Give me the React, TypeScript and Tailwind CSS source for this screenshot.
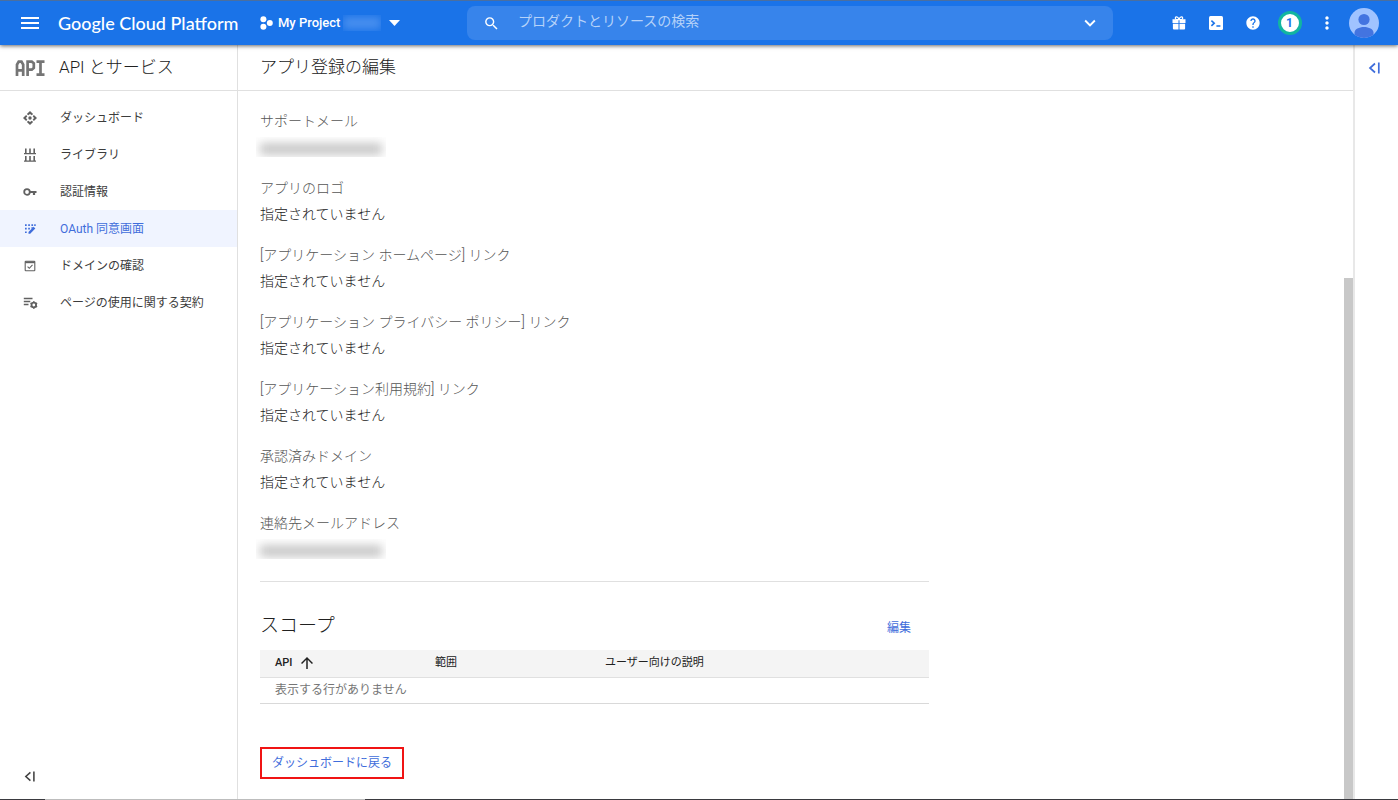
import React from 'react';
import { MdArrowUpward, MdExpandMore, MdHelp, MdMoreVert, MdSearch } from 'react-icons/md';

const MenuIcon = () => (
  <svg viewBox="0 0 18 12" className="w-[18px] h-3" fill="currentColor">
    <path d="M0 0h18v2H0zM0 5h18v2H0zM0 10h18v2H0z" />
  </svg>
);

const ProjectIcon = () => (
  <svg viewBox="0 0 13 14" className="w-[13px] h-3.5" fill="currentColor">
    <circle cx="3.4" cy="3.2" r="3" />
    <circle cx="9.8" cy="7" r="3" />
    <circle cx="3.4" cy="10.8" r="3" />
  </svg>
);

const GiftIcon = () => (
  <svg viewBox="0 0 14 14" className="w-3.5 h-3.5" fill="currentColor">
    <path d="M.5 3.3h6v3.7h-6zM7.500 3.300h6v3.700h-6zM.9 7.700h5.600v5.700H1.900a1 1 0 0 1-1-1zM7.500 7.700h5.600v4.700a1 1 0 0 1-1 1H7.500z" />
    <path d="M7 3.600C6.400 1.600 5.400.8 4.400.9 2.800 1.100 3 3.500 4.600 3.600zM7 3.600C7.600 1.600 8.600.8 9.600.9c1.600.2 1.400 2.600-.2 2.700z" fill="none" stroke="currentColor" strokeWidth="1.200" />
  </svg>
);

const ShellIcon = () => (
  <svg viewBox="0 0 14 14" className="w-3.5 h-3.5">
    <rect width="14" height="14" rx="1.5" fill="#fff" />
    <path d="M2.4 4.6 5.2 7.2 2.4 9.8M7.4 10h4" fill="none" stroke="#1a73e8" strokeWidth="1.6" />
  </svg>
);

const AvatarIcon = () => (
  <svg viewBox="0 0 30 30" className="w-[30px] h-[30px]">
    <clipPath id="avatar">
      <circle cx="15" cy="15" r="15" />
    </clipPath>
    <g clipPath="url(#avatar)">
      <rect width="30" height="30" fill="#a0c3ff" />
      <circle cx="15" cy="11.5" r="5.6" fill="#4374e0" />
      <path d="M5.5 30v-5.5c0-3.4 4.6-5.6 9.5-5.6s9.5 2.2 9.5 5.6V30z" fill="#4374e0" />
    </g>
  </svg>
);

const ApiLogo = () => (
  <svg viewBox="0 0 30 16" className="w-[30px] h-4" fill="none" stroke="#757575" strokeWidth="2.7">
    <path d="M2 16V4.600l1.700-2.900h2.800l1.700 2.900V16M2 10.300h6.200" />
    <path d="M12.600 16V1.700h4.200l2 1.600v4.700l-2 1.700h-4.200" />
    <path d="M21.500 1.700h8M25.500 1.700v13M21.500 14.600h8" />
  </svg>
);

const DashboardIcon = () => (
  <svg viewBox="0 0 14 14" className="w-3.5 h-3.5" fill="currentColor">
    <circle cx="7" cy="7" r="1.700" />
    <path d="M7 0 10.100 3.100 8.800 4.300 7 3 5.200 4.300 3.900 3.100zM7 14l3.100-3.100-1.300-1.200L7 11 5.200 9.700l-1.300 1.200zM0 7l3.100-3.100 1.200 1.300L3 7l1.300 1.800-1.200 1.300zM14 7l-3.100-3.100-1.200 1.300L11 7 9.700 8.800l1.200 1.300z" />
  </svg>
);

const LibraryIcon = () => (
  <svg viewBox="0 0 14 14" className="w-3.5 h-3.5" fill="currentColor">
    <path d="M2 .5h1.600v4.500H2zM6.200.5h1.600v4.500H6.200zM10.400.5H12v4.500h-1.600zM1 5h12v1.200H1zM2 8h1.600v4.500H2zM6.200 8h1.600v4.500H6.200zM10.400 8H12v4.500h-1.600zM1 12.500h12v1.200H1z" />
  </svg>
);

const KeyIcon = () => (
  <svg viewBox="0 0 14 14" className="w-3.5 h-3.5" fill="none" stroke="currentColor" strokeWidth="1.8">
    <circle cx="4" cy="7" r="2.800" />
    <path d="M6.800 7h6.700M11 7v3" strokeWidth="2.200" />
  </svg>
);

const ConsentIcon = () => (
  <svg viewBox="0 0 12 12" className="w-3 h-3" fill="currentColor">
    <path d="M1 1.200h1.700v1.700H1zM4.200 1.200h1.700v1.700H4.200zM7.400 1.200h1.700v1.700H7.400zM10.200 1.200h1.500v1.700h-1.500zM1 4.800h1.700v1.700H1zM4.200 4.800h1.700v1.700H4.200zM7.400 4.300h1.500v1.500H7.400zM1 8.400h1.700v1.700H1z" />
    <path d="M4.500 10.700V8.900l5.100-5.100 1.700 1.700-5.100 5.200z" />
  </svg>
);

const DomainIcon = () => (
  <svg viewBox="0 0 14 14" className="w-3.5 h-3.5" fill="none" stroke="currentColor" strokeWidth="1.1">
    <rect x="2.200" y="2.200" width="9.600" height="9.600" rx=".6" />
    <path d="M2.200 3.300h9.600" strokeWidth="1.800" />
    <path d="m4.600 7.600 1.700 1.700 3.200-3.400" />
  </svg>
);

const AgreementIcon = () => (
  <svg viewBox="0 0 15 14" className="w-[15px] h-3.5" fill="none" stroke="currentColor">
    <path d="M.8 2.500h8.700M.8 5.500h6.500M.8 8.500h4.700" strokeWidth="1.400" />
    <circle cx="10.800" cy="9" r="2.300" strokeWidth="1.800" />
    <path
      d="M10.800 5.200v1.300M10.800 11.500v1.300M7.500 7.100l1.100.6M13 10.300l1.100.6M7.500 10.900l1.100-.6M13 7.700l1.100-.6"
      strokeWidth="1.600"
    />
  </svg>
);

const CollapseIcon = ({ className }: { className: string }) => (
  <svg viewBox="0 0 12 12" className={className} fill="none" stroke="currentColor" strokeWidth="1.7">
    <path d="M7 1.500 2 6l5 4.500M10.800.5v11" />
  </svg>
);

// Masked address
const Redacted = () => (
  <div className="w-[130px] h-5 -ml-1 overflow-hidden flex items-center">
    <div className="w-[122px] h-3 mt-1 ml-1 bg-[#c8c8c8] blur-[5px]"></div>
  </div>
);

const navItems = [
  { label: 'ダッシュボード', icon: <DashboardIcon /> },
  { label: 'ライブラリ', icon: <LibraryIcon /> },
  { label: '認証情報', icon: <KeyIcon /> },
  { label: 'OAuth 同意画面', icon: <ConsentIcon />, active: true },
  { label: 'ドメインの確認', icon: <DomainIcon /> },
  { label: 'ページの使用に関する契約', icon: <AgreementIcon /> },
];

const NOT_SET = '指定されていません';

const fields: { label: string; value?: string }[] = [
  { label: 'サポートメール' },
  { label: 'アプリのロゴ', value: NOT_SET },
  { label: '[アプリケーション ホームページ] リンク', value: NOT_SET },
  { label: '[アプリケーション プライバシー ポリシー] リンク', value: NOT_SET },
  { label: '[アプリケーション利用規約] リンク', value: NOT_SET },
  { label: '承認済みドメイン', value: NOT_SET },
  { label: '連絡先メールアドレス' },
];

const Header = () => (
  <header className="relative z-10 h-[45px] border-t border-[#4b6f9f] bg-[#1a73e8] text-white flex items-center shadow-[0_1px_4px_rgba(0,0,0,0.6)]">
    <div className="w-[467px] shrink-0 flex items-center pl-[21px]">
      <button aria-label="メニュー" className="shrink-0">
        <MenuIcon />
      </button>
      <a href="#" className="w-[201px] pl-[19px] font-['Lato'] text-[18px] leading-6 font-medium whitespace-nowrap">
        Google Cloud Platform
      </a>
      <button className="ml-5 flex items-center text-[13px] font-medium whitespace-nowrap">
        <ProjectIcon />
        <span className="ml-[5px]">My Project</span>
        <span className="ml-[3px] w-[38px] h-4 overflow-hidden flex items-center">
          <span className="w-full h-3 bg-[#4a90ef] blur-[4px]"></span>
        </span>
        <svg viewBox="0 0 11 6" className="ml-2 w-[11px] h-1.5" fill="currentColor">
          <path d="M0 0h11L5.500 6z" />
        </svg>
      </button>
    </div>

    <form className="flex-1 h-[34px] mr-[47px] rounded-lg bg-[#3784eb] flex items-center pl-4 pr-3">
      <MdSearch size={17} className="shrink-0" />
      <input
        type="text"
        aria-label="検索"
        placeholder="プロダクトとリソースの検索"
        className="flex-1 min-w-0 ml-[18px] pb-1 bg-transparent text-[14px] leading-5 outline-none placeholder:text-[#b5d2f9]"
      />
      <button type="button" aria-label="検索オプション">
        <MdExpandMore size={22} />
      </button>
    </form>

    <div className="flex items-center pr-4">
      <button aria-label="特典" className="w-[37px] flex justify-center">
        <GiftIcon />
      </button>
      <button aria-label="Cloud Shell" className="w-[37px] flex justify-center">
        <ShellIcon />
      </button>
      <button aria-label="ヘルプ" className="w-[37px] flex justify-center">
        <MdHelp size={16} />
      </button>
      <button aria-label="通知" className="w-[37px] flex justify-center">
        <span className="w-6 h-6 rounded-full border-[3px] border-[#12b5a0] bg-white text-[#1a73e8] text-[12px] leading-[18px] font-bold text-center">
          1
        </span>
      </button>
      <button aria-label="その他" className="w-[37px] flex justify-center">
        <MdMoreVert size={20} />
      </button>
      <button aria-label="アカウント" className="w-[37px] flex justify-center">
        <AvatarIcon />
      </button>
    </div>
  </header>
);

const Sidebar = () => (
  <aside className="w-[238px] shrink-0 border-r border-[#e0e0e0] flex flex-col">
    <div className="h-[46px] shrink-0 border-b border-[#e0e0e0] flex items-center pl-[15px]">
      <ApiLogo />
      <h2 className="ml-3.5 pb-0.5 text-[17px] leading-6 font-light">API とサービス</h2>
    </div>
    <nav className="pt-2">
      {navItems.map((item) => (
        <a
          key={item.label}
          href="#"
          className={`h-[37px] flex items-center text-[12px] ${
            item.active ? 'bg-[#f0f4ff] text-[#3f6ddb]' : 'text-[#3c3c3c]'
          }`}
        >
          <span className={`w-[60px] flex justify-center ${item.active ? '' : 'text-[#616161]'}`}>{item.icon}</span>
          {item.label}
        </a>
      ))}
    </nav>
    <button aria-label="メニューを閉じる" className="mt-auto mb-[17px] ml-6 self-start text-[#424242]">
      <CollapseIcon className="w-[11px] h-[11px]" />
    </button>
  </aside>
);

const ScopeSection = () => (
  <section className="pt-7">
    <div className="h-10 flex items-center justify-between pr-[18px] pb-2">
      <h2 className="text-[19px] leading-7 font-light">スコープ</h2>
      <a href="#" className="pt-1 text-[12px] text-[#3f6ddb]">
        編集
      </a>
    </div>
    <table className="w-full table-fixed text-left">
      <thead>
        <tr className="h-[27px] bg-[#f4f4f4] border-b border-[#e0e0e0] text-[11px]">
          <th className="w-[160px] pl-[15px] font-medium">
            <span className="flex items-center gap-1.5">
              API <MdArrowUpward size={18} />
            </span>
          </th>
          <th className="w-[170px] pl-[15px] font-normal">範囲</th>
          <th className="pl-[15px] font-normal">ユーザー向けの説明</th>
        </tr>
      </thead>
      <tbody>
        <tr className="h-[26px] border-b border-[#d9d9d9]">
          <td colSpan={3} className="pl-[15px] text-[12px] text-[#757575]">
            表示する行がありません
          </td>
        </tr>
      </tbody>
    </table>
  </section>
);

export default function App() {
  return (
    <div className="min-h-screen flex flex-col bg-white text-[#212121] font-['Roboto','Noto_Sans_CJK_JP',sans-serif]">
      <Header />

      <div className="flex-1 flex">
        <Sidebar />

        <div className="flex-1 min-w-0 flex flex-col">
          <div className="h-[46px] shrink-0 border-b border-[#e0e0e0] flex items-center pl-[22px]">
            <h1 className="pb-0.5 text-[17px] leading-6 font-light">アプリ登録の編集</h1>
          </div>

          <div className="flex-1 flex justify-between">
            <main className="w-full max-w-[691px] pl-[22px] pt-5 pb-4">
              <dl className="flex flex-col gap-[21px] pb-[22px] border-b border-[#e0e0e0]">
                {fields.map((field) => (
                  <div key={field.label} className="flex flex-col gap-1.5 text-[14px] leading-5 font-light">
                    <dt className="text-[#565656]">{field.label}</dt>
                    <dd>{field.value ?? <Redacted />}</dd>
                  </div>
                ))}
              </dl>

              <ScopeSection />

              <a
                href="#"
                className="mt-[43px] h-8 px-2.5 inline-flex items-center border-2 border-[#f01414] text-[12px] text-[#3f6ddb]"
              >
                ダッシュボードに戻る
              </a>
            </main>

            {/* Scrollbar */}
            <div className="w-[9px] flex flex-col pt-[187px]">
              <div className="flex-1 bg-[#c8c8c8]"></div>
            </div>
          </div>
        </div>

        <aside className="w-[45px] shrink-0 border-l-2 border-[#e8e8e8]">
          <button aria-label="パネルを開く" className="mt-[17px] ml-[13px] text-[#3f6ddb]">
            <CollapseIcon className="w-3 h-3" />
          </button>
        </aside>
      </div>

      <div className="h-px flex bg-[#3a3a3f]">
        <div className="w-[45px]"></div>
        <div className="w-[320px] bg-[#bdbdbd]"></div>
      </div>
    </div>
  );
}
